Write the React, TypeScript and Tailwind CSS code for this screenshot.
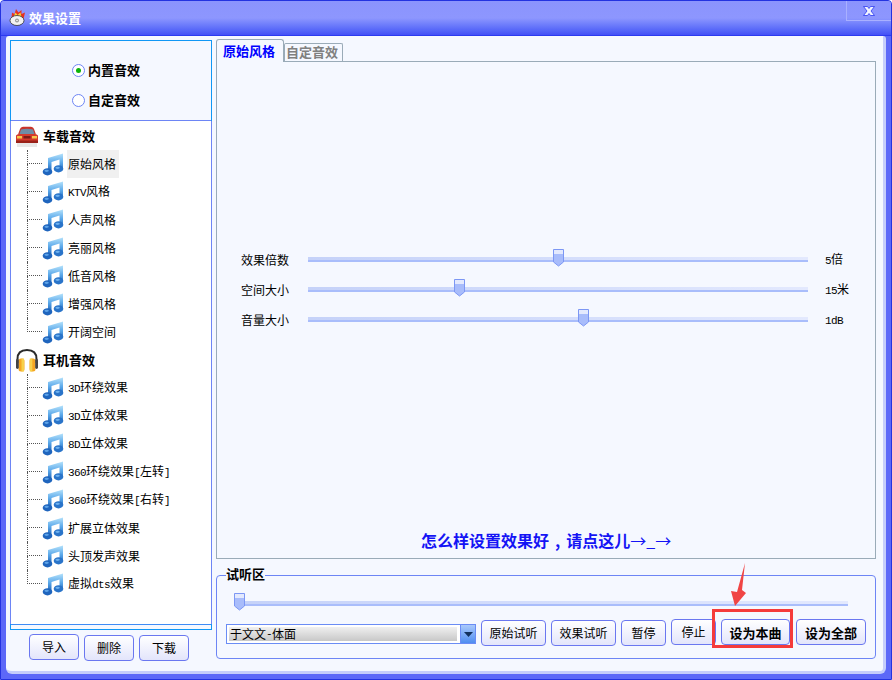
const carEffects = ["原始风格", "KTV风格", "人声风格", "亮丽风格", "低音风格", "增强风格", "开阔空间"];
const headEffects = ["3D环绕效果", "3D立体效果", "8D立体效果", "360环绕效果[左转]", "360环绕效果[右转]", "扩展立体效果", "头顶发声效果", "虚拟dts效果"];
const sliders = [
  { label: "效果倍数", value: "5倍", pct: 50 },
  { label: "空间大小", value: "15米", pct: 30.2 },
  { label: "音量大小", value: "1dB", pct: 55 },
];

// latin runs are half width in the original bitmap font
function Mixed({ text }: { text: string }) {
  const parts = text.split(/([A-Za-z0-9\[\]-]+)/);
  return (
    <>
      {parts.map((p, i) =>
        i % 2 === 1 ? (
          <span key={i} className="font-['Liberation_Mono',monospace] text-[11px] tracking-[-0.6px]">
            {p}
          </span>
        ) : (
          <span key={i}>{p}</span>
        ),
      )}
    </>
  );
}

function NoteIcon() {
  return (
    <svg width="22" height="23" viewBox="0 0 22 23" className="shrink-0">
      <defs>
        <linearGradient id="noteStem" x1="0" y1="0" x2="0" y2="1">
          <stop offset="0" stopColor="#b5e2fb" />
          <stop offset="0.5" stopColor="#5aa8ea" />
          <stop offset="1" stopColor="#1c5fb5" />
        </linearGradient>
      </defs>
      <path d="M6 5 L21 0.500 V16 H17.500 V6.500 L9.500 9 V19 H6 Z" fill="url(#noteStem)" />
      <ellipse cx="5.500" cy="18.800" rx="4.800" ry="3.600" fill="#1f65bd" />
      <ellipse cx="16.500" cy="15.800" rx="4.800" ry="3.600" fill="#2a74c9" />
      <ellipse cx="4.600" cy="17.800" rx="2.200" ry="1.100" fill="#5da3e8" />
      <ellipse cx="15.600" cy="14.800" rx="2.200" ry="1.100" fill="#6db0ee" />
    </svg>
  );
}

function CarIcon() {
  return (
    <svg width="24" height="21" viewBox="0 0 24 21" className="shrink-0">
      <path d="M5 3 Q5.500 1 8 0.800 H16 Q18.500 1 19 3 L21 8.500 H3 Z" fill="#c9352b" />
      <path d="M6 3.500 Q12 2 18 3.500 L19.500 8 H4.500 Z" fill="#6f8da6" />
      <path d="M1 9.500 Q2 8 4 8 H20 Q22 8 23 9.500 V15.500 H1 Z" fill="#d43a2c" />
      <rect x="2" y="10" width="5" height="2.500" fill="#f6c64b" />
      <rect x="17" y="10" width="5" height="2.500" fill="#f6c64b" />
      <rect x="8.500" y="10" width="7" height="2.500" fill="#7c1d17" />
      <rect x="1" y="14.500" width="22" height="2.500" fill="#9a2119" />
      <rect x="2" y="17" width="20" height="4" fill="#e8e8e8" />
    </svg>
  );
}

function HeadphoneIcon() {
  return (
    <svg width="24" height="24" viewBox="0 0 24 24" className="shrink-0">
      <path d="M2.500 15 V11 Q2.500 2 12 2 Q21.500 2 21.500 11 V15" fill="none" stroke="#2b2b2b" strokeWidth="2" />
      <rect x="3.500" y="10.500" width="6" height="13" rx="2.500" fill="#f5a623" />
      <rect x="14.500" y="10.500" width="6" height="13" rx="2.500" fill="#f5a623" />
      <rect x="6.500" y="10.500" width="2.500" height="13" fill="#f7d04a" />
      <rect x="14.800" y="10.500" width="2.500" height="13" fill="#f7d04a" />
      <rect x="1" y="11" width="2.800" height="10" rx="1.400" fill="#444" />
      <rect x="20.200" y="11" width="2.800" height="10" rx="1.400" fill="#444" />
    </svg>
  );
}

function AppIcon() {
  return (
    <svg width="17" height="17" viewBox="0 0 17 17" className="shrink-0">
      <path d="M2.500 9 L3 3.500 L5.500 5 L7 0 L9.500 3.500 L12.500 1 L12.500 5 L16 3.500 L14.500 10 Z" fill="#e8321e" />
      <path d="M4.500 8 L6.500 3.500 L8.500 6 L11.500 3.500 L12.500 8 Z" fill="#f8d23a" />
      <ellipse cx="8" cy="11.500" rx="7" ry="5" fill="#f2f2f2" stroke="#333" strokeWidth="0.800" />
      <circle cx="8" cy="11.500" r="2" fill="#9a9a9a" />
      <circle cx="8" cy="11.500" r="0.800" fill="#fff" />
    </svg>
  );
}

function CloseIcon() {
  return (
    <svg width="12" height="10" viewBox="0 0 12 10">
      <path d="M0.500 0.500 H4.500 L6 2.500 L7.500 0.500 H11.500 L8 5 L11.500 9.500 H7.500 L6 7.500 L4.500 9.500 H0.500 L4 5 Z" fill="#f2f4ff" stroke="#2c3af0" strokeWidth="0.800" />
    </svg>
  );
}

function Radio({ checked, label }: { checked?: boolean; label: string }) {
  return (
    <div className="flex items-center gap-[3px] h-[30px] pl-[61px]">
      <span className="w-[13px] h-[13px] rounded-full border border-[#6d85f5] bg-white flex items-center justify-center">
        {checked && <span className="w-[5px] h-[5px] rounded-full bg-[#0ab30a]" />}
      </span>
      <span className="-mt-[2px] text-[13px] font-bold text-black leading-none">{label}</span>
    </div>
  );
}

function TreeItem({ text, last, active }: { text: string; last?: boolean; active?: boolean }) {
  return (
    <div className="flex items-center h-[28px]">
      <div className="w-[15px] self-stretch flex flex-col">
        <div className="h-[14px] border-l border-b border-dotted border-[#555]" />
        <div className={last ? "flex-1" : "flex-1 border-l border-dotted border-[#555]"} />
      </div>
      <NoteIcon />
      <div className={active ? "ml-[3px] pl-[1px] w-[52px] h-full flex items-center bg-[#f0f0f0]" : "ml-[3px] pl-[1px] h-full flex items-center"}>
        <span className="text-[12px] text-black whitespace-nowrap leading-none">
          <Mixed text={text} />
        </span>
      </div>
    </div>
  );
}

function Thumb({ pct }: { pct: number }) {
  return (
    <svg
      width="11"
      height="18"
      viewBox="0 0 11 18"
      className="absolute top-[-8px] ml-[-5px]"
      style={{ left: pct + "%" }}
    >
      <path d="M0.500 0.500 H10.500 V13 L5.500 17 L0.500 13 Z" fill="#a8bcfb" stroke="#7c97f4" />
      <rect x="1" y="1" width="9" height="4" fill="#e3e9fe" />
    </svg>
  );
}

function Track({ pct }: { pct: number }) {
  return (
    <div className="relative flex-1 h-[5px] border-b-2 border-[#a9bdfb] bg-gradient-to-r from-[#c5d2f9] to-[#e3e9fe]">
      <Thumb pct={pct} />
    </div>
  );
}

function Btn({ text, w, bold, offset }: { text: string; w: string; bold?: boolean; offset?: string }) {
  return (
    <button
      className={`${w} ${offset ?? ""} h-[26px] shrink-0 rounded-[4px] border border-[#6a77f0] bg-gradient-to-b from-white to-[#e3e5fb] text-black leading-none ${bold ? "text-[13px] font-bold" : "text-[12px]"}`}
    >
      {text}
    </button>
  );
}

export default function App() {
  return (
    <div className="relative w-[892px] h-[680px] flex flex-col overflow-hidden rounded-t-[4px] border border-[#2433e0] bg-[#7f8afc] font-['Noto_Sans_CJK_SC',sans-serif]">
      {/* title bar */}
      <div className="h-[35px] shrink-0 flex items-start pl-[8px] bg-gradient-to-b from-[#8b94fd] via-[#8d96fe] to-[#4450f6] border-b border-[#2c3af0]">
        <div className="flex items-center gap-[3px] mt-[8px]">
          <AppIcon />
          <span className="text-[13px] font-bold text-white leading-none">效果设置</span>
        </div>
        <div className="ml-auto w-[45px] h-[20px] border-l border-b border-[#a9b0ff] flex items-center justify-center">
          <CloseIcon />
        </div>
      </div>

      {/* body */}
      <div className="flex-1 flex flex-col px-[4px] pb-[5px] bg-[#5c68f8]">
        <div className="flex-1 flex items-start ml-[1px] mr-[1px] pl-[4px] pt-[3px] bg-[#f5f8ff] rounded-t-[3px] rounded-b-[6px] border-b-[3px] border-r-[3px] border-[#c5cdfb]">
          {/* left column */}
          <div className="w-[202px] shrink-0 mt-[1px]">
            <div className="h-[590px] flex flex-col border border-[#1097f5]">
              <div className="h-[80px] shrink-0 pt-[14px] border-b border-[#6d85f5]">
                <Radio checked label="内置音效" />
                <Radio label="自定音效" />
              </div>
              <div className="flex-1 flex flex-col pt-[1px] pl-[3px] -mx-[1px] border-x border-[#6d85f5] bg-white">
                <div className="flex items-center gap-[4px] h-[28px] pl-[1px]">
                  <CarIcon />
                  <span className="-mt-[2px] text-[13px] font-bold text-black leading-none">车载音效</span>
                </div>
                <div className="pl-[13px]">
                  {carEffects.map((t, i) => (
                    <TreeItem key={t} text={t} active={i === 0} last={i === carEffects.length - 1} />
                  ))}
                </div>
                <div className="flex items-center gap-[4px] h-[28px] pl-[1px]">
                  <HeadphoneIcon />
                  <span className="-mt-[2px] text-[13px] font-bold text-black leading-none">耳机音效</span>
                </div>
                <div className="pl-[13px]">
                  {headEffects.map((t, i) => (
                    <TreeItem key={t} text={t} last={i === headEffects.length - 1} />
                  ))}
                </div>
              </div>
              <div className="h-[5px] shrink-0 border-t border-[#3f8cf5] bg-[#f5f8ff]" />
            </div>
            <div className="flex items-start gap-[5px] pl-[19px] mt-[4px]">
              <Btn text="导入" w="w-[50px]" />
              <Btn text="删除" w="w-[50px]" offset="mt-[1px]" />
              <Btn text="下载" w="w-[50px]" offset="mt-[1px]" />
            </div>
          </div>

          {/* right column */}
          <div className="w-[660px] shrink-0 ml-[4px]">
            <div className="flex items-end h-[22px]">
              <div className="w-[68px] h-[23px] -mb-[1px] z-10 flex items-center pl-[6px] pb-[2px] rounded-t-[3px] border border-b-0 border-[#9aabb8] bg-[#f5f8ff] text-[13px] font-bold text-[#0000ff] leading-none">
                原始风格
              </div>
              <div className="w-[59px] h-[18px] flex items-center pl-[1px] pb-[2px] rounded-t-[2px] border border-b-0 border-[#9aabb8] bg-[#f5f8ff] text-[13px] font-bold text-[#808080] leading-none">
                自定音效
              </div>
            </div>
            <div className="h-[498px] flex flex-col pt-[182px] pb-[6px] border border-[#9aabb8]">
              {sliders.map((s) => (
                <div key={s.label} className="flex items-center h-[30px] pl-[24px]">
                  <span className="mt-[2px] w-[67px] text-[12px] text-black leading-none">{s.label}</span>
                  <div className="w-[500px] flex">
                    <Track pct={s.pct} />
                  </div>
                  <span className="mt-[2px] ml-[17px] text-[12px] text-black leading-none">
                    <Mixed text={s.value} />
                  </span>
                </div>
              ))}
              <div className="mt-auto h-[24px] flex items-center pl-[204px] whitespace-nowrap text-[16px] font-bold text-[#1414f5] leading-none">
                怎么样设置效果好
                <span className="mx-[6px]">,</span>
                请点这儿
                <span className="font-normal">→_→</span>
              </div>
            </div>

            {/* preview group */}
            <div className="mt-[16px] h-[84px] rounded-[4px] border border-[#6d85f5] pl-[9px]">
              <div className="w-fit -mt-[10px] bg-[#f5f8ff] text-[13px] font-bold text-black leading-[16px]">
                试听区
              </div>
              <div className="flex w-[614px] ml-[8px] mt-[19px]">
                <Track pct={0.8} />
              </div>
              <div className="flex items-start mt-[13px]">
                <div className="w-[250px] h-[20px] mt-[5px] shrink-0 flex items-center border border-[#6a8cf5] bg-white">
                  <div className="w-[228px] h-[14px] ml-[2px] flex items-center pl-[1px] bg-gradient-to-b from-[#f0f0f0] to-[#c8c8c8] text-[12px] text-black leading-none">
                    <Mixed text="于文文-体面" />
                  </div>
                  <div className="ml-auto w-[15px] h-full flex items-center justify-center border-l border-[#6a8cf5] bg-gradient-to-b from-[#a9c9fb] to-[#4f8df0]">
                    <svg width="9" height="5" viewBox="0 0 9 5">
                      <path d="M0 0 H9 L4.500 5 Z" fill="#12315f" />
                    </svg>
                  </div>
                </div>
                <div className="flex items-start gap-[5px] ml-[5px]">
                  <Btn text="原始试听" w="w-[65px]" offset="mt-[1px]" />
                  <Btn text="效果试听" w="w-[65px]" offset="mt-[1px]" />
                  <Btn text="暂停" w="w-[45px]" offset="mt-[1px]" />
                  <Btn text="停止" w="w-[45px]" />
                  <Btn text="设为本曲" w="w-[69px]" bold />
                  <Btn text="设为全部" w="w-[70px]" offset="ml-[1px]" bold />
                </div>
              </div>
            </div>
          </div>
        </div>
      </div>

      {/* red annotation over the screenshot */}
      <div className="absolute left-[711px] top-[608px] w-[81px] h-[39px] border-[3px] border-[#f53b3b]" />
      <svg width="20" height="46" viewBox="0 0 20 46" className="absolute left-[725px] top-[561px]">
        <path d="M19 1 L16 28 L20 31 L9 44 L5 29 L11 30 Z" fill="#f04545" />
      </svg>
    </div>
  );
}
